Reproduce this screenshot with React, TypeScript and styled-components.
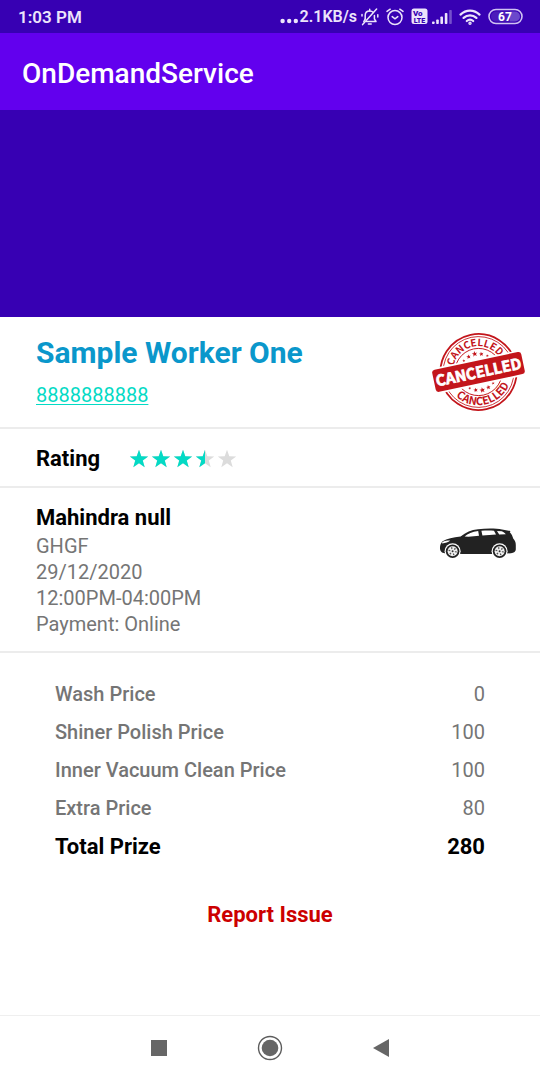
import React from 'react';
import styled, { createGlobalStyle } from 'styled-components';

const GlobalStyle = createGlobalStyle`
  * { box-sizing: border-box; }
  body {
    margin: 0;
    background: #fff;
    font-family: Roboto, 'Noto Sans', sans-serif;
  }
`;

const Page = styled.div`
  display: flex;
  flex-direction: column;
  min-height: 100vh;
  background: #fff;
`;

const StatusBar = styled.div`
  display: flex;
  align-items: center;
  justify-content: space-between;
  height: 33px;
  padding: 0 17px 0 18px;
  background: #3700b3;
  color: #ece4fb;
`;

const StatusGroup = styled.div<{ $gap: number }>`
  display: flex;
  align-items: center;
  gap: ${(p) => p.$gap}px;
  svg { display: block; }
`;

const StatusText = styled.span<{ $size: number }>`
  font-size: ${(p) => p.$size}px;
  font-weight: 600;
  line-height: 20px;
`;

const AppBar = styled.header`
  display: flex;
  align-items: center;
  height: 77px;
  padding: 4px 22px 0;
  background: #6200ee;
`;

const AppTitle = styled.h1`
  margin: 0;
  color: #fff;
  font-size: 28px;
  font-weight: 500;
  line-height: 36px;
`;

const Banner = styled.div`
  height: 207px;
  background: #3700b3;
`;

const Section = styled.section<{ $top: number; $bottom: number }>`
  display: flex;
  justify-content: space-between;
  align-items: flex-start;
  padding: ${(p) => p.$top}px 12px ${(p) => p.$bottom}px 36px;
  border-bottom: 2px solid #ececec;
`;

const RatingSection = styled.section`
  display: flex;
  align-items: center;
  gap: 29px;
  height: 59px;
  padding: 2px 36px 0;
  border-bottom: 2px solid #ececec;
`;

const WorkerInfo = styled.div`
  padding-top: 4px;
`;

const WorkerName = styled.h2`
  margin: 0 0 12px;
  color: #0a97cb;
  font-size: 30px;
  font-weight: 700;
  line-height: 36px;
`;

const Phone = styled.a`
  display: block;
  width: max-content;
  color: #03dac5;
  font-size: 20px;
  line-height: 24px;
  text-decoration-thickness: 1px;
  text-underline-offset: 2px;
`;

const Heading = styled.h3`
  margin: 0;
  color: #000;
  font-size: 22px;
  font-weight: 700;
  line-height: 30px;
`;

const Detail = styled.p`
  margin: 0;
  color: #757575;
  font-size: 20px;
  line-height: 26px;
`;

const Stars = styled.div`
  display: flex;
  gap: 2px;
  svg { display: block; }
`;

const CarBox = styled.div`
  padding: 25px 11px 0 0;
  svg { display: block; }
`;

const StampBox = styled.div`
  svg { display: block; }
`;

const Prices = styled.table`
  width: calc(100% - 110px);
  margin: 22px 55px 0;
  border-collapse: collapse;
  color: #757575;
  font-size: 20px;
  line-height: 22px;
`;

const Label = styled.th`
  height: 38px;
  padding: 0;
  font-weight: 500;
  text-align: left;
`;

const Amount = styled.td`
  padding: 0;
  text-align: right;
`;

const TotalRow = styled.tr`
  color: #000;
  font-size: 22px;
  th, td { height: 39px; font-weight: 700; }
`;

const ReportButton = styled.button`
  align-self: center;
  margin: 28px 0;
  padding: 8px 16px;
  border: 0;
  background: none;
  color: #cc0000;
  font-family: inherit;
  font-size: 22px;
  font-weight: 700;
  line-height: 26px;
`;

const NavBar = styled.nav`
  display: flex;
  align-items: center;
  justify-content: center;
  gap: 63px;
  height: 65px;
  margin-top: auto;
  border-top: 1px solid #efefef;
`;

const NavButton = styled.button`
  display: flex;
  align-items: center;
  justify-content: center;
  width: 48px;
  height: 48px;
  padding: 0;
  border: 0;
  background: none;
`;

const starPath = 'M10 0.8 L12.3 7.2 L19.2 7.4 L13.8 11.6 L15.7 18.2 L10 14.3 L4.3 18.2 L6.2 11.6 L0.8 7.4 L7.7 7.2 Z';

function Star({ fill }: { fill: number }) {
  return (
    <svg width="20" height="20" viewBox="0 0 20 20" aria-hidden="true">
      <path d={starPath} fill="#dcdcdc" />
      {fill > 0 && (
        <path d={starPath} fill="#03dac5" clipPath={fill < 1 ? 'url(#halfStar)' : undefined} />
      )}
      <clipPath id="halfStar">
        <rect width="10" height="20" />
      </clipPath>
    </svg>
  );
}

function MutedBell() {
  return (
    <svg width="18" height="18" viewBox="0 0 18 18" fill="none" stroke="#ece4fb" strokeWidth="1.5" strokeLinecap="round" strokeLinejoin="round">
      <path d="M4.2 11V7.3C4.2 4.6 6 2.9 8.7 2.9C10.2 2.9 11.4 3.4 12.2 4.4M13.4 7.4V10.8L15 13.5H5.4" />
      <path d="M4.2 11L2.8 13.5M8.7 1.3V2.9M7.4 15.9H10.2" />
      <path d="M15.6 1L1.6 16.6M1 8V6.4M16.8 9V6.8" />
    </svg>
  );
}

function AlarmClock() {
  return (
    <svg width="18" height="18" viewBox="0 0 18 18" fill="none" stroke="#ece4fb" strokeWidth="1.5" strokeLinecap="round">
      <circle cx="9" cy="9.6" r="7" />
      <path d="M6.2 8.6L9 10.8L11.8 8.6M1 3.4L4.2 1.2M17 3.4L13.8 1.2" />
    </svg>
  );
}

function VolteBadge() {
  return (
    <svg width="17" height="17" viewBox="0 0 17 17">
      <rect x="0.5" y="0.5" width="16" height="15.5" rx="2.5" fill="#ece4fb" />
      <g fill="#3700b3" fontFamily="Roboto, sans-serif" fontWeight="900">
        <text x="2" y="7.8" fontSize="8">Vo</text>
        <text x="8.5" y="14.5" fontSize="7" textAnchor="middle">LTE</text>
      </g>
    </svg>
  );
}

function Signal() {
  return (
    <svg width="20" height="16" viewBox="0 0 20 16" fill="#ece4fb">
      <rect x="0" y="12.5" width="2.6" height="2.5" rx="0.8" />
      <rect x="4.2" y="10.5" width="2.6" height="4.5" rx="0.8" />
      <rect x="8.4" y="7.5" width="2.6" height="7.5" rx="0.8" />
      <rect x="12.8" y="4" width="2.6" height="11" rx="0.8" />
      <rect x="17.2" y="1" width="2.6" height="14" rx="0.8" opacity="0.35" />
    </svg>
  );
}

function Wifi() {
  return (
    <svg width="22" height="16" viewBox="0 0 22 16" fill="none" stroke="#ece4fb" strokeWidth="2.2" strokeLinecap="round">
      <path d="M1.5 5.6C7 0.3 15 0.3 20.5 5.6M4.6 8.9C8.3 5.4 13.7 5.4 17.4 8.9M7.8 12C9.9 10.1 12.1 10.1 14.2 12" />
      <circle cx="11" cy="14.2" r="0.6" fill="#ece4fb" />
    </svg>
  );
}

function Battery() {
  return (
    <svg width="35" height="17" viewBox="0 0 35 17">
      <rect x="1" y="1.5" width="33" height="14" rx="7" fill="none" stroke="#cfc2f2" strokeWidth="1.6" />
      <path d="M8 3.5H22V13.5H8A5 5 0 0 1 8 3.5Z" fill="#4b1cba" />
      <path d="M22 3.5H27A5 5 0 0 1 27 13.5H22Z" fill="#6b48cb" />
      <text x="17" y="12.6" fill="#fff" fontFamily="Roboto, sans-serif" fontWeight="700" fontSize="12" textAnchor="middle">67</text>
    </svg>
  );
}

const tinyStar = 'M0 -2.6L0.7 -0.8L2.5 -0.8L1.1 0.4L1.6 2.2L0 1.1L-1.6 2.2L-1.1 0.4L-2.5 -0.8L-0.7 -0.8Z';
const starSpots: [number, number, number][] = [
  [-12, -14, 0.6],
  [-6.5, -17, 0.9],
  [0, -18.5, 1.1],
  [6.5, -17, 0.9],
  [12, -14, 0.6],
];

function CancelledStamp() {
  return (
    <svg width="96" height="82" viewBox="0 0 96 82" role="img" aria-label="Cancelled">
      <g transform="translate(46.5 41) rotate(-12)" fill="#c3151b" fontFamily="'Noto Sans CJK JP', Roboto, sans-serif" fontWeight="700">
        <circle r="38" fill="none" stroke="#c3151b" strokeWidth="1.8" />
        <circle r="35.4" fill="none" stroke="#c3151b" strokeWidth="0.8" />
        <circle r="23.6" fill="none" stroke="#c3151b" strokeWidth="0.9" />
        <path id="topArc" d="M-25.8 0A25.8 25.8 0 0 1 25.8 0" fill="none" />
        <path id="bottomArc" d="M-33.2 0A33.2 33.2 0 0 0 33.2 0" fill="none" />
        <text fontSize="10" textAnchor="middle">
          <textPath href="#topArc" startOffset="50%">CANCELLED</textPath>
        </text>
        <text fontSize="11" textAnchor="middle">
          <textPath href="#bottomArc" startOffset="50%">CANCELLED</textPath>
        </text>
        {starSpots.map(([x, y, s]) => (
          <g key={x}>
            <path d={tinyStar} transform={`translate(${x} ${y}) scale(${s})`} />
            <path d={tinyStar} transform={`translate(${x} ${-y}) scale(${s})`} />
          </g>
        ))}
        <rect x="-46" y="-13" width="92" height="26" rx="3.5" fill="#fff" />
        <rect x="-45.5" y="-11.4" width="91" height="22.6" rx="3" />
        <text y="5.6" fontSize="15" textAnchor="middle" fill="#fff" stroke="#fff" strokeWidth="0.7">CANCELLED</text>
      </g>
    </svg>
  );
}

function Wheel({ cx, cy }: { cx: number; cy: number }) {
  return (
    <g>
      <circle cx={cx} cy={cy} r="8" fill="#fff" />
      <circle cx={cx} cy={cy} r="6.8" fill="#222" />
      <circle cx={cx} cy={cy} r="5" fill="#f0f0f0" />
      <circle cx={cx} cy={cy} r="3.2" fill="none" stroke="#555" strokeWidth="1.8" strokeDasharray="1.2 2.1" />
      <circle cx={cx} cy={cy} r="1" fill="#333" />
    </g>
  );
}

function Car() {
  return (
    <svg width="78" height="32" viewBox="0 0 78 32" role="img" aria-label="Car">
      <path
        fill="#222"
        d="M1 20.6C0.8 17.6 1.6 15.2 3.6 13.2C8 10.6 14 9.4 21.6 8.4C27 4.4 32 1.8 39 1.2C47 0.4 57 0.4 63 1.4L71.5 3L70.8 4.2C72.8 6.2 73.6 8.2 74.2 10.6C76 12.4 76.8 14.4 76.8 17V21.6C76.8 23.6 75 24.8 72 25.2L60 26H24L7 25.6C3.6 25.2 1.2 24.2 1 20.6Z"
      />
      <path fill="#fff" d="M25.6 8.6C29 5.6 33 3.6 39.2 3L40 7.8L29.4 8.8ZM42.4 2.8C47 2.4 51.6 2.4 55 2.8L57 6.6L43.4 7.6ZM58 3L62.8 3.2C65 4.2 66 5 66.8 6.2L60.2 6.6Z" />
      <path fill="#fff" d="M3.2 14.2C5.6 13 8.2 12.6 11.2 12.6C9.2 14.4 6.6 15.2 3.2 15.4Z" />
      <Wheel cx={13.6} cy={23.2} />
      <Wheel cx={60.6} cy={23.2} />
    </svg>
  );
}

const ratings = [1, 1, 1, 0.5, 0];
const prices = [
  { label: 'Wash Price', amount: 0 },
  { label: 'Shiner Polish Price', amount: 100 },
  { label: 'Inner Vacuum Clean Price', amount: 100 },
  { label: 'Extra Price', amount: 80 },
];
const details = ['GHGF', '29/12/2020', '12:00PM-04:00PM', 'Payment: Online'];

export default function App() {
  return (
    <Page>
      <GlobalStyle />
      <StatusBar>
        <StatusText $size={17}>1:03 PM</StatusText>
        <StatusGroup $gap={7}>
          <StatusGroup $gap={4}>
            <StatusGroup $gap={1}>
              <svg width="19" height="16" viewBox="0 0 19 16" fill="#ece4fb">
                <circle cx="2.6" cy="12" r="2.2" />
                <circle cx="9.2" cy="12" r="2.2" />
                <circle cx="15.8" cy="12" r="2.2" />
              </svg>
              <StatusText $size={16}>2.1KB/s</StatusText>
            </StatusGroup>
            <MutedBell />
          </StatusGroup>
          <AlarmClock />
          <StatusGroup $gap={4}>
            <VolteBadge />
            <Signal />
          </StatusGroup>
          <Wifi />
          <Battery />
        </StatusGroup>
      </StatusBar>
      <AppBar>
        <AppTitle>OnDemandService</AppTitle>
      </AppBar>
      <Banner />
      <main>
        <Section $top={14} $bottom={14}>
          <WorkerInfo>
            <WorkerName>Sample Worker One</WorkerName>
            <Phone href="tel:8888888888">8888888888</Phone>
          </WorkerInfo>
          <StampBox>
            <CancelledStamp />
          </StampBox>
        </Section>
        <RatingSection>
          <Heading>Rating</Heading>
          <Stars role="img" aria-label="3.5 out of 5 stars">
            {ratings.map((fill, i) => (
              <Star key={i} fill={fill} />
            ))}
          </Stars>
        </RatingSection>
        <Section $top={15} $bottom={14}>
          <div>
            <Heading>Mahindra null</Heading>
            {details.map((d) => (
              <Detail key={d}>{d}</Detail>
            ))}
          </div>
          <CarBox>
            <Car />
          </CarBox>
        </Section>
        <Prices>
          <tbody>
            {prices.map((p) => (
              <tr key={p.label}>
                <Label scope="row">{p.label}</Label>
                <Amount>{p.amount}</Amount>
              </tr>
            ))}
            <TotalRow>
              <Label scope="row">Total Prize</Label>
              <Amount>280</Amount>
            </TotalRow>
          </tbody>
        </Prices>
      </main>
      <ReportButton type="button">Report Issue</ReportButton>
      <NavBar>
        <NavButton type="button" aria-label="Recent apps">
          <svg width="16" height="16" viewBox="0 0 16 16">
            <rect width="16" height="16" fill="#666" />
          </svg>
        </NavButton>
        <NavButton type="button" aria-label="Home">
          <svg width="26" height="26" viewBox="0 0 26 26">
            <circle cx="13" cy="13" r="11.5" fill="none" stroke="#5c5c5c" strokeWidth="1.4" />
            <circle cx="13" cy="13" r="8.3" fill="#666" />
          </svg>
        </NavButton>
        <NavButton type="button" aria-label="Back">
          <svg width="16" height="18" viewBox="0 0 16 18">
            <path d="M0 9L16 0V18Z" fill="#666" />
          </svg>
        </NavButton>
      </NavBar>
    </Page>
  );
}
